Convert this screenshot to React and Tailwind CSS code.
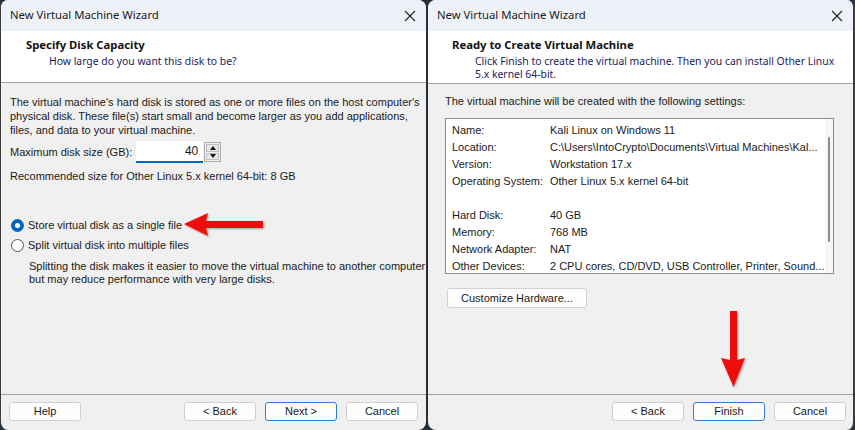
import React from 'react';

const ui = { fontFamily: '"Noto Sans", "Open Sans", sans-serif' };
const body = { fontFamily: '"Liberation Sans", Arial, sans-serif' };

const TitleBar = () => (
  <div className="h-[31px] shrink-0 bg-[#eef2f8] flex items-center justify-between pl-[9px] pr-[10px]">
    <span className="text-[11.3px] text-[#1a1a1a]" style={ui}>New Virtual Machine Wizard</span>
    <svg width="12" height="12" viewBox="0 0 12 12" className="text-[#222]">
      <path d="M1 1 L11 11 M11 1 L1 11" stroke="currentColor" strokeWidth="1.1" />
    </svg>
  </div>
);

const Btn = ({ children, primary, className = '' }) => (
  <button
    className={`h-[19px] w-[72px] rounded-[3px] bg-[#fdfdfd] text-[11px] text-[#1a1a1a] leading-none border ${
      primary ? 'border-[#2f7fd0]' : 'border-[#d0d0d0]'
    } ${className}`}
    style={body}
  >
    {children}
  </button>
);

const Footer = ({ children }) => (
  <div className="h-[36px] shrink-0 border-t border-[#a0a0a0] flex items-center px-[8px] pb-[2px]">
    {children}
  </div>
);

const Radio = ({ checked, label }) => (
  <div className="flex items-center h-[20px]">
    <span
      className={`w-[13px] h-[13px] rounded-full flex items-center justify-center mr-[4px] ${
        checked ? 'bg-[#0067c0]' : 'border border-[#555] bg-white'
      }`}
    >
      {checked && <span className="w-[5px] h-[5px] rounded-full bg-white"></span>}
    </span>
    <span>{label}</span>
  </div>
);

const LeftWindow = () => (
  <div className="w-[426px] h-full flex flex-col bg-[#f0f0f0] rounded-[8px] overflow-hidden border-l border-[#3b3b3b] relative">
    <TitleBar />
    <div className="h-[52px] shrink-0 bg-white border-b border-[#a0a0a0] pl-[25px] pt-[6px]" style={ui}>
      <div className="text-[11.3px] font-bold text-[#111] leading-[16px]">Specify Disk Capacity</div>
      <div className="text-[10.4px] text-[#1a1a5a] leading-[16px] pl-[23px]">How large do you want this disk to be?</div>
    </div>
    <div className="flex-1 px-[9px] pt-[12px] text-[11px] text-[#1a1a1a] leading-[14px] whitespace-nowrap" style={body}>
      <p>
        The virtual machine's hard disk is stored as one or more files on the host computer's
        <br />
        physical disk. These file(s) start small and become larger as you add applications,
        <br />
        files, and data to your virtual machine.
      </p>
      <div className="flex items-center mt-[4px]">
        <span>Maximum disk size (GB):</span>
        <div className="ml-[4px] w-[67px] h-[22px] bg-white border-b-2 border-[#0067c0] flex items-center justify-end pr-[5px] text-[12px]">
          40
        </div>
        <div className="ml-[1px] w-[17px] h-[20px] border border-[#adadad] flex flex-col p-[1px] gap-[1px]">
          <div className="flex-1 bg-[#e8e8e8] border border-[#c0c0c0] flex items-center justify-center">
            <svg width="6" height="4" viewBox="0 0 6 4"><path d="M0 4 L3 0 L6 4 Z" fill="#111" /></svg>
          </div>
          <div className="flex-1 bg-[#e8e8e8] border border-[#c0c0c0] flex items-center justify-center">
            <svg width="6" height="4" viewBox="0 0 6 4"><path d="M0 0 L3 4 L6 0 Z" fill="#111" /></svg>
          </div>
        </div>
      </div>
      <p className="mt-[6px]">Recommended size for Other Linux 5.x kernel 64-bit: 8 GB</p>
      <div className="mt-[32px] pl-[1px]">
        <Radio checked label="Store virtual disk as a single file" />
        <Radio label="Split virtual disk into multiple files" />
      </div>
      <p className="pl-[19px] mt-[5px] leading-[13px]">
        Splitting the disk makes it easier to move the virtual machine to another computer
        <br />
        but may reduce performance with very large disks.
      </p>
    </div>
    <Footer>
      <Btn>Help</Btn>
      <div className="ml-auto flex gap-[9px]">
        <Btn>&lt; Back</Btn>
        <Btn primary>Next &gt;</Btn>
        <Btn>Cancel</Btn>
      </div>
    </Footer>
    <svg className="absolute left-[181px] top-[211px]" width="86" height="28" viewBox="0 0 86 28">
      <defs>
        <filter id="sh1" x="-20%" y="-40%" width="140%" height="180%">
          <feDropShadow dx="1" dy="1" stdDeviation="1.2" floodColor="#000" floodOpacity="0.35" />
        </filter>
      </defs>
      <path d="M2 13 L26 2 L24 10 L81 10 L81 17 L24 17 L26 25 Z" fill="#ee1111" filter="url(#sh1)" />
    </svg>
  </div>
);

const rows = [
  ['Name:', 'Kali Linux on Windows 11'],
  ['Location:', 'C:\\Users\\IntoCrypto\\Documents\\Virtual Machines\\Kal...'],
  ['Version:', 'Workstation 17.x'],
  ['Operating System:', 'Other Linux 5.x kernel 64-bit'],
  ['', ''],
  ['Hard Disk:', '40 GB'],
  ['Memory:', '768 MB'],
  ['Network Adapter:', 'NAT'],
  ['Other Devices:', '2 CPU cores, CD/DVD, USB Controller, Printer, Sound...'],
];

const RightWindow = () => (
  <div className="flex-1 h-full flex flex-col bg-[#f0f0f0] rounded-[8px] overflow-hidden border-r-2 border-[#3b3b3b] relative">
    <TitleBar />
    <div className="h-[53px] shrink-0 bg-white border-b border-[#a0a0a0] pl-[24px] pt-[6px]" style={ui}>
      <div className="text-[11.3px] font-bold text-[#111] leading-[16px]">Ready to Create Virtual Machine</div>
      <div className="text-[10.4px] text-[#1a1a5a] leading-[13px] pl-[23px] pt-[2px] whitespace-nowrap">
        Click Finish to create the virtual machine. Then you can install Other Linux
        <br />
        5.x kernel 64-bit.
      </div>
    </div>
    <div className="flex-1 px-[17px] pt-[10px] text-[11px] text-[#1a1a1a] leading-[14px]" style={body}>
      <p>The virtual machine will be created with the following settings:</p>
      <div className="mt-[10px] w-[389px] h-[156px] bg-white border border-[#8c8c8c] flex">
        <div className="flex-1 pt-[2px] pl-[6px]">
          {rows.map(([k, v], i) => (
            <div key={i} className="flex h-[17px] items-center whitespace-nowrap">
              <span className="w-[98px] shrink-0">{k}</span>
              <span>{v}</span>
            </div>
          ))}
        </div>
        <div className="w-[10px] bg-[#f6f6f6] flex justify-center pt-[18px]">
          <div className="w-[2px] h-[105px] bg-[#8a8a8a] rounded-full"></div>
        </div>
      </div>
      <button className="mt-[14px] ml-[2px] w-[140px] h-[20px] rounded-[3px] bg-[#fdfdfd] border border-[#d0d0d0] text-[11px] leading-none">
        Customize Hardware...
      </button>
    </div>
    <Footer>
      <div className="ml-auto flex gap-[9px] mr-[-1px]">
        <Btn>&lt; Back</Btn>
        <Btn primary>Finish</Btn>
        <Btn>Cancel</Btn>
      </div>
    </Footer>
    <svg className="absolute left-[290px] top-[309px]" width="32" height="82" viewBox="0 0 32 82">
      <defs>
        <filter id="sh2" x="-40%" y="-20%" width="180%" height="140%">
          <feDropShadow dx="1" dy="1" stdDeviation="1.2" floodColor="#000" floodOpacity="0.35" />
        </filter>
      </defs>
      <path d="M12 2 L19 2 L19 51 L27 49 L15.5 78 L3 49 L12 51 Z" fill="#ee1111" filter="url(#sh2)" />
    </svg>
  </div>
);

export default function App() {
  return (
    <div className="w-[855px] h-[430px] bg-[#26303b] flex gap-[2px] overflow-hidden">
      <LeftWindow />
      <RightWindow />
    </div>
  );
}
